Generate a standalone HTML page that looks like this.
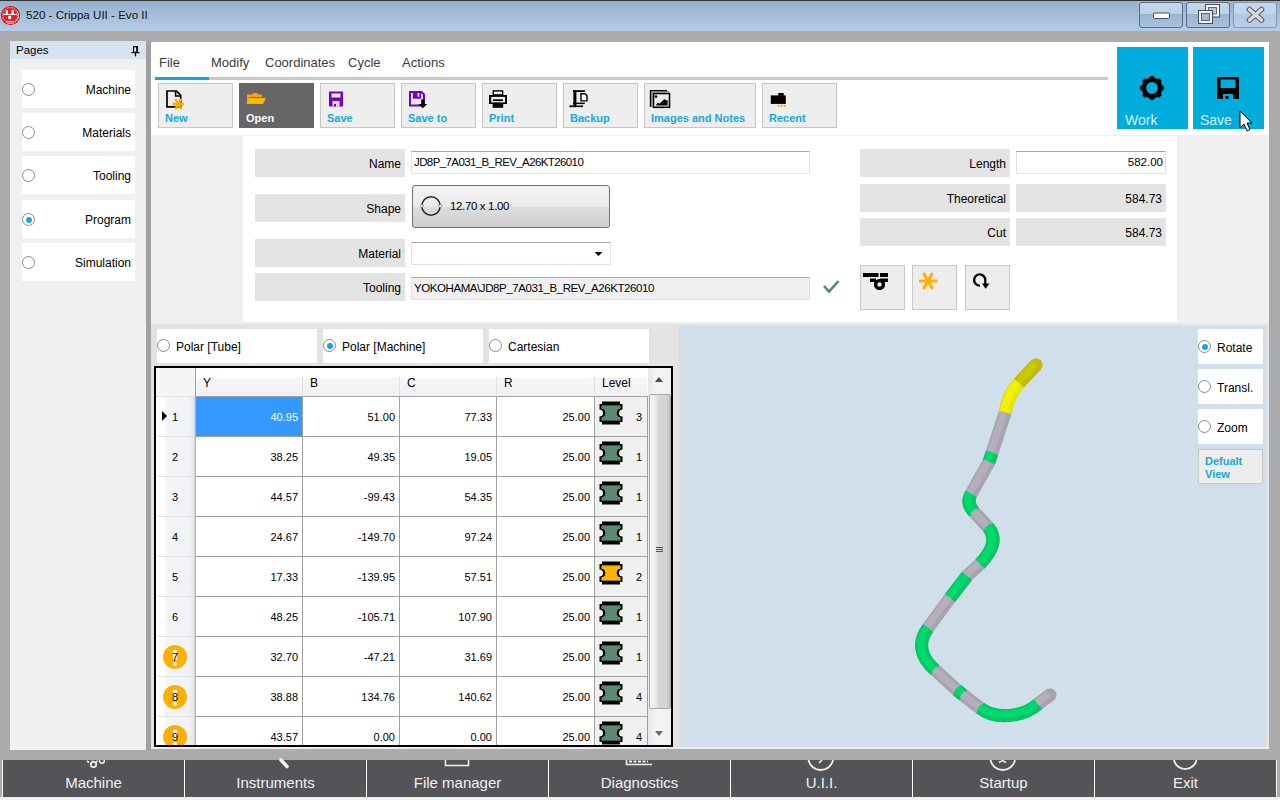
<!DOCTYPE html>
<html><head><meta charset="utf-8">
<style>
*{box-sizing:border-box;margin:0;padding:0}
html,body{width:1280px;height:800px;overflow:hidden;background:#ababab;font-family:"Liberation Sans",sans-serif;color:#000}
.a{position:absolute}
#title{left:0;top:0;width:1280px;height:31px;background:linear-gradient(#97b0ce,#b4cce6);border-top:1px solid #333}
.tb{top:2px;height:26px;width:44px;border:1px solid #5a6b85;border-radius:3px;background:linear-gradient(#c3d6ec 0,#bdd1e9 45%,#99b4d3 46%,#a8c2df 100%)}
.pcard{left:22px;width:113px;height:38px;background:#fff}
.radio{width:13px;height:13px;border:1px solid #8a8a8a;border-radius:50%;background:#fff}
.radio.on::after{content:"";position:absolute;left:2.5px;top:2.5px;width:6px;height:6px;border-radius:50%;background:#12a8e0}
.ptxt{font-size:12px;right:4px;top:13px;color:#000}
.tab{top:55px;font-size:13px;color:#3c3c3c}
.btn{top:83px;height:45px;background:#eeeeee;border:1px solid #c6c6c6}
.btn .lbl{position:absolute;left:6px;top:28px;font-size:11px;font-weight:bold;color:#17a8da;white-space:nowrap}
.lab{background:#e3e3e3;font-size:12px;text-align:right;padding-right:4px;padding-top:1px;white-space:nowrap}
.inp{background:#fff;border:1px solid #dde1e9;border-top-color:#a4a4a4;font-size:11.5px;white-space:nowrap;overflow:hidden}
.bb{top:760px;height:37px;background:#545358;color:#f2f2f2;font-size:15px;text-align:center;border-left:1px solid #fff;padding-top:14px}
.hdr{background:linear-gradient(#fff 0,#fff 33%,#f6f7f9 36%,#eff0f3 100%)}
.hd{font-size:12px;line-height:31px;color:#000}
.rh{left:0;width:38px;background:linear-gradient(90deg,#fff 0,#fff 24%,#f4f5f8 26%,#f1f2f5 85%,#e6e7ea 100%)}
.cv{font-size:11px;line-height:40px;white-space:nowrap}
.sb{background:linear-gradient(90deg,#e8e8e8,#f4f4f4 40%,#f0f0f0)}
.thumb{border:1px solid #a8a8a8;border-radius:2px;background:linear-gradient(90deg,#f4f4f4 0,#e8e8e8 30%,#d6d6d8 45%,#d4d4d6 85%,#bcbcc0 100%)}
.card{background:#fff}
.rt{font-size:12px;white-space:nowrap;margin-top:1px}
</style></head><body>
<!-- title bar -->
<div class="a" id="title"></div>
<div class="a" style="left:2px;top:7px;width:17px;height:17px;border-radius:50%;background:#e8101b;border:1px solid #fff;box-shadow:0 0 0 1px #c00"></div>
<div class="a" style="left:26px;top:8px;font-size:11.6px;color:#111;white-space:nowrap">520 - Crippa UII - Evo II</div>
<div class="a tb" style="left:1139px"></div>
<div class="a tb" style="left:1186px"></div>
<div class="a tb" style="left:1233px;background:linear-gradient(#c6d8ed 0,#c0d4ea 45%,#b3c9e3 46%,#b9cee7 100%);border-color:#8496b0"></div>

<!-- pages panel -->
<div class="a" style="left:10px;top:41px;width:136px;height:709px;background:#f0f0f0"></div>
<div class="a" style="left:10px;top:41px;width:136px;height:18px;background:#d6e4f2"></div>
<div class="a" style="left:16px;top:44px;font-size:11.5px">Pages</div>
<div class="a pcard" style="top:70px"><div class="a radio" style="left:0;top:13px"></div><div class="a ptxt">Machine</div></div>
<div class="a pcard" style="top:113px"><div class="a radio" style="left:0;top:13px"></div><div class="a ptxt">Materials</div></div>
<div class="a pcard" style="top:156px"><div class="a radio" style="left:0;top:13px"></div><div class="a ptxt">Tooling</div></div>
<div class="a pcard" style="top:200px"><div class="a radio on" style="left:0;top:13px"></div><div class="a ptxt">Program</div></div>
<div class="a pcard" style="top:243px"><div class="a radio" style="left:0;top:13px"></div><div class="a ptxt">Simulation</div></div>

<!-- main panel -->
<div class="a" style="left:146px;top:41px;width:5px;height:709px;background:#a0a0a0"></div>
<div class="a" style="left:151px;top:42px;width:1118px;height:707px;background:#f0f0f0"></div>
<div class="a" style="left:151px;top:42px;width:1118px;height:93px;background:#fff"></div>

<!-- tabs -->
<div class="a tab" style="left:159px">File</div>
<div class="a tab" style="left:211px">Modify</div>
<div class="a tab" style="left:265px">Coordinates</div>
<div class="a tab" style="left:348px">Cycle</div>
<div class="a tab" style="left:402px">Actions</div>
<div class="a" style="left:155px;top:77px;width:953px;height:3px;background:#c8c8c8"></div>
<div class="a" style="left:155px;top:77px;width:54px;height:3px;background:#0ea8d8"></div>

<!-- toolbar buttons -->
<div class="a btn" style="left:158px;width:75px"><span class="lbl">New</span></div>
<div class="a btn" style="left:239px;width:75px;background:#666;border-color:#666"><span class="lbl" style="color:#fff">Open</span></div>
<div class="a btn" style="left:320px;width:75px"><span class="lbl">Save</span></div>
<div class="a btn" style="left:401px;width:75px"><span class="lbl">Save to</span></div>
<div class="a btn" style="left:482px;width:75px"><span class="lbl">Print</span></div>
<div class="a btn" style="left:563px;width:75px"><span class="lbl">Backup</span></div>
<div class="a btn" style="left:644px;width:112px"><span class="lbl">Images and Notes</span></div>
<div class="a btn" style="left:762px;width:75px"><span class="lbl">Recent</span></div>

<!-- work / save tiles -->
<div class="a" style="left:1117px;top:47px;width:71px;height:82px;background:#00acdc"><div class="a" style="left:8px;top:65px;font-size:14px;color:#d9f1f9">Work</div></div>
<div class="a" style="left:1193px;top:47px;width:71px;height:82px;background:#00acdc"><div class="a" style="left:7px;top:65px;font-size:14px;color:#d9f1f9">Save</div></div>

<!-- form card -->
<div class="a" style="left:243px;top:136px;width:934px;height:186px;background:#fff"></div>
<div class="a lab" style="left:255px;top:149px;width:150px;height:28px;line-height:28px">Name</div>
<div class="a inp" style="left:411px;top:151px;width:399px;height:23px;line-height:21px;padding-left:2px;font-size:11.5px;letter-spacing:-0.6px">JD8P_7A031_B_REV_A26KT26010</div>
<div class="a lab" style="left:255px;top:194px;width:150px;height:28px;line-height:28px">Shape</div>
<div class="a" style="left:412px;top:185px;width:198px;height:43px;border:1px solid #707070;border-radius:3px;background:linear-gradient(#f2f2f2 0,#ebebeb 50%,#dddddd 51%,#cfcfcf 100%)"><div class="a" style="left:37px;top:14px;font-size:11.5px;letter-spacing:-0.35px">12.70 x 1.00</div></div>
<div class="a lab" style="left:255px;top:239px;width:150px;height:28px;line-height:28px">Material</div>
<div class="a inp" style="left:411px;top:242px;width:200px;height:23px"></div>
<div class="a lab" style="left:255px;top:273px;width:150px;height:28px;line-height:28px">Tooling</div>
<div class="a inp" style="left:411px;top:277px;width:399px;height:23px;line-height:21px;padding-left:2px;background:#f0f0f0;font-size:11.5px;letter-spacing:-0.42px">YOKOHAMA\JD8P_7A031_B_REV_A26KT26010</div>

<div class="a lab" style="left:860px;top:149px;width:150px;height:28px;line-height:28px">Length</div>
<div class="a inp" style="left:1016px;top:151px;width:150px;height:23px;line-height:21px;text-align:right;padding-right:2px">582.00</div>
<div class="a lab" style="left:860px;top:184px;width:150px;height:28px;line-height:28px">Theoretical</div>
<div class="a lab" style="left:1016px;top:184px;width:150px;height:28px;line-height:28px">584.73</div>
<div class="a lab" style="left:860px;top:218px;width:150px;height:28px;line-height:28px">Cut</div>
<div class="a lab" style="left:1016px;top:218px;width:150px;height:28px;line-height:28px">584.73</div>

<div class="a" style="left:860px;top:265px;width:45px;height:45px;background:#ededed;border:1px solid #c8c8c8"></div>
<div class="a" style="left:912px;top:265px;width:45px;height:45px;background:#ededed;border:1px solid #c8c8c8"></div>
<div class="a" style="left:965px;top:265px;width:45px;height:45px;background:#ededed;border:1px solid #c8c8c8"></div>

<!-- lower area -->
<div class="a" style="left:151px;top:323px;width:1118px;height:1px;background:#ececec"></div>
<div class="a" style="left:151px;top:324px;width:1118px;height:423px;background:#e3e3e3"></div>
<div class="a" style="left:151px;top:747px;width:1118px;height:2px;background:#ececec"></div>
<div class="a card" style="left:157px;top:329px;width:160px;height:34px"><div class="a radio" style="left:0;top:10px"></div><div class="a rt" style="left:19px;top:10px">Polar [Tube]</div></div>
<div class="a card" style="left:323px;top:329px;width:160px;height:34px"><div class="a radio on" style="left:0;top:10px"></div><div class="a rt" style="left:19px;top:10px">Polar [Machine]</div></div>
<div class="a card" style="left:489px;top:329px;width:160px;height:34px"><div class="a radio" style="left:0;top:10px"></div><div class="a rt" style="left:19px;top:10px">Cartesian</div></div>
<!-- table -->
<div class="a" style="left:154px;top:366px;width:519px;height:381px;border:2px solid #000;background:#fff;overflow:hidden">
<div class="a hdr" style="left:0;top:0;width:491px;height:28px"></div>
<div class="a" style="left:0;top:0;width:39px;height:28px;background:#f4f5f7"></div>
<div class="a hd" style="left:47px;top:0">Y</div>
<div class="a hd" style="left:154px;top:0">B</div>
<div class="a" style="left:146px;top:9px;width:1px;height:18px;background:#dedfe2"></div>
<div class="a hd" style="left:251px;top:0">C</div>
<div class="a" style="left:243px;top:9px;width:1px;height:18px;background:#dedfe2"></div>
<div class="a hd" style="left:348px;top:0">R</div>
<div class="a" style="left:340px;top:9px;width:1px;height:18px;background:#dedfe2"></div>
<div class="a hd" style="left:446px;top:0">Level</div>
<div class="a" style="left:438px;top:9px;width:1px;height:18px;background:#dedfe2"></div>
<div class="a" style="left:39px;top:0;width:1px;height:28px;background:#a0a0a0"></div>
<div class="a" style="left:0;top:28px;width:491px;height:1px;background:#a0a0a0"></div>
<div class="a rh" style="left:0;top:29px;height:39px"></div>
<div class="a" style="left:1px;top:28px;width:37px;height:1px;background:#e2e3e6"></div>
<div class="a" style="left:40px;top:29px;width:106px;height:39px;background:#3399ff;"></div>
<div class="a cv" style="right:373px;top:29px;color:#fff">40.95</div>
<div class="a" style="left:147px;top:29px;width:96px;height:39px;"></div>
<div class="a cv" style="right:276px;top:29px;color:#000">51.00</div>
<div class="a" style="left:244px;top:29px;width:96px;height:39px;"></div>
<div class="a cv" style="right:179px;top:29px;color:#000">77.33</div>
<div class="a" style="left:341px;top:29px;width:97px;height:39px;"></div>
<div class="a cv" style="right:81px;top:29px;color:#000">25.00</div>
<div class="a" style="left:439px;top:29px;width:52px;height:39px;background:#f0f0f0;"></div>
<svg class="a" style="left:443px;top:33px" width="24" height="24" viewBox="0 0 24 24"><path d="M3 0.5H21V3H23.5V8.5A3.5 3.5 0 0 0 23.5 15.5V21H21V23.5H3V21H0.5V15.5A3.5 3.5 0 0 0 0.5 8.5V3H3Z" fill="#000"/><path d="M2 4H22V8A4 4 0 0 0 22 16V20H2V16A4 4 0 0 0 2 8Z" fill="#5a8a73" stroke="#000" stroke-width="0.8"/></svg>
<div class="a cv" style="right:29px;top:29px">3</div>
<div class="a" style="left:39px;top:68px;width:452px;height:1px;background:#a0a0a0"></div>
<div class="a cv" style="left:16px;top:29px">1</div>
<div class="a" style="left:6px;top:43px;width:0;height:0;border-left:5px solid #000;border-top:5px solid transparent;border-bottom:5px solid transparent"></div>
<div class="a rh" style="left:0;top:69px;height:39px"></div>
<div class="a" style="left:1px;top:68px;width:37px;height:1px;background:#e2e3e6"></div>
<div class="a" style="left:40px;top:69px;width:106px;height:39px;"></div>
<div class="a cv" style="right:373px;top:69px;color:#000">38.25</div>
<div class="a" style="left:147px;top:69px;width:96px;height:39px;"></div>
<div class="a cv" style="right:276px;top:69px;color:#000">49.35</div>
<div class="a" style="left:244px;top:69px;width:96px;height:39px;"></div>
<div class="a cv" style="right:179px;top:69px;color:#000">19.05</div>
<div class="a" style="left:341px;top:69px;width:97px;height:39px;"></div>
<div class="a cv" style="right:81px;top:69px;color:#000">25.00</div>
<div class="a" style="left:439px;top:69px;width:52px;height:39px;background:#f0f0f0;"></div>
<svg class="a" style="left:443px;top:73px" width="24" height="24" viewBox="0 0 24 24"><path d="M3 0.5H21V3H23.5V8.5A3.5 3.5 0 0 0 23.5 15.5V21H21V23.5H3V21H0.5V15.5A3.5 3.5 0 0 0 0.5 8.5V3H3Z" fill="#000"/><path d="M2 4H22V8A4 4 0 0 0 22 16V20H2V16A4 4 0 0 0 2 8Z" fill="#5a8a73" stroke="#000" stroke-width="0.8"/></svg>
<div class="a cv" style="right:29px;top:69px">1</div>
<div class="a" style="left:39px;top:108px;width:452px;height:1px;background:#a0a0a0"></div>
<div class="a cv" style="left:16px;top:69px">2</div>
<div class="a rh" style="left:0;top:109px;height:39px"></div>
<div class="a" style="left:1px;top:108px;width:37px;height:1px;background:#e2e3e6"></div>
<div class="a" style="left:40px;top:109px;width:106px;height:39px;"></div>
<div class="a cv" style="right:373px;top:109px;color:#000">44.57</div>
<div class="a" style="left:147px;top:109px;width:96px;height:39px;"></div>
<div class="a cv" style="right:276px;top:109px;color:#000">-99.43</div>
<div class="a" style="left:244px;top:109px;width:96px;height:39px;"></div>
<div class="a cv" style="right:179px;top:109px;color:#000">54.35</div>
<div class="a" style="left:341px;top:109px;width:97px;height:39px;"></div>
<div class="a cv" style="right:81px;top:109px;color:#000">25.00</div>
<div class="a" style="left:439px;top:109px;width:52px;height:39px;background:#f0f0f0;"></div>
<svg class="a" style="left:443px;top:113px" width="24" height="24" viewBox="0 0 24 24"><path d="M3 0.5H21V3H23.5V8.5A3.5 3.5 0 0 0 23.5 15.5V21H21V23.5H3V21H0.5V15.5A3.5 3.5 0 0 0 0.5 8.5V3H3Z" fill="#000"/><path d="M2 4H22V8A4 4 0 0 0 22 16V20H2V16A4 4 0 0 0 2 8Z" fill="#5a8a73" stroke="#000" stroke-width="0.8"/></svg>
<div class="a cv" style="right:29px;top:109px">1</div>
<div class="a" style="left:39px;top:148px;width:452px;height:1px;background:#a0a0a0"></div>
<div class="a cv" style="left:16px;top:109px">3</div>
<div class="a rh" style="left:0;top:149px;height:39px"></div>
<div class="a" style="left:1px;top:148px;width:37px;height:1px;background:#e2e3e6"></div>
<div class="a" style="left:40px;top:149px;width:106px;height:39px;"></div>
<div class="a cv" style="right:373px;top:149px;color:#000">24.67</div>
<div class="a" style="left:147px;top:149px;width:96px;height:39px;"></div>
<div class="a cv" style="right:276px;top:149px;color:#000">-149.70</div>
<div class="a" style="left:244px;top:149px;width:96px;height:39px;"></div>
<div class="a cv" style="right:179px;top:149px;color:#000">97.24</div>
<div class="a" style="left:341px;top:149px;width:97px;height:39px;"></div>
<div class="a cv" style="right:81px;top:149px;color:#000">25.00</div>
<div class="a" style="left:439px;top:149px;width:52px;height:39px;background:#f0f0f0;"></div>
<svg class="a" style="left:443px;top:153px" width="24" height="24" viewBox="0 0 24 24"><path d="M3 0.5H21V3H23.5V8.5A3.5 3.5 0 0 0 23.5 15.5V21H21V23.5H3V21H0.5V15.5A3.5 3.5 0 0 0 0.5 8.5V3H3Z" fill="#000"/><path d="M2 4H22V8A4 4 0 0 0 22 16V20H2V16A4 4 0 0 0 2 8Z" fill="#5a8a73" stroke="#000" stroke-width="0.8"/></svg>
<div class="a cv" style="right:29px;top:149px">1</div>
<div class="a" style="left:39px;top:188px;width:452px;height:1px;background:#a0a0a0"></div>
<div class="a cv" style="left:16px;top:149px">4</div>
<div class="a rh" style="left:0;top:189px;height:39px"></div>
<div class="a" style="left:1px;top:188px;width:37px;height:1px;background:#e2e3e6"></div>
<div class="a" style="left:40px;top:189px;width:106px;height:39px;"></div>
<div class="a cv" style="right:373px;top:189px;color:#000">17.33</div>
<div class="a" style="left:147px;top:189px;width:96px;height:39px;"></div>
<div class="a cv" style="right:276px;top:189px;color:#000">-139.95</div>
<div class="a" style="left:244px;top:189px;width:96px;height:39px;"></div>
<div class="a cv" style="right:179px;top:189px;color:#000">57.51</div>
<div class="a" style="left:341px;top:189px;width:97px;height:39px;"></div>
<div class="a cv" style="right:81px;top:189px;color:#000">25.00</div>
<div class="a" style="left:439px;top:189px;width:52px;height:39px;background:#f0f0f0;"></div>
<svg class="a" style="left:443px;top:193px" width="24" height="24" viewBox="0 0 24 24"><path d="M3 0.5H21V3H23.5V8.5A3.5 3.5 0 0 0 23.5 15.5V21H21V23.5H3V21H0.5V15.5A3.5 3.5 0 0 0 0.5 8.5V3H3Z" fill="#000"/><path d="M2 4H22V8A4 4 0 0 0 22 16V20H2V16A4 4 0 0 0 2 8Z" fill="#ffb400" stroke="#000" stroke-width="0.8"/></svg>
<div class="a cv" style="right:29px;top:189px">2</div>
<div class="a" style="left:39px;top:228px;width:452px;height:1px;background:#a0a0a0"></div>
<div class="a cv" style="left:16px;top:189px">5</div>
<div class="a rh" style="left:0;top:229px;height:39px"></div>
<div class="a" style="left:1px;top:228px;width:37px;height:1px;background:#e2e3e6"></div>
<div class="a" style="left:40px;top:229px;width:106px;height:39px;"></div>
<div class="a cv" style="right:373px;top:229px;color:#000">48.25</div>
<div class="a" style="left:147px;top:229px;width:96px;height:39px;"></div>
<div class="a cv" style="right:276px;top:229px;color:#000">-105.71</div>
<div class="a" style="left:244px;top:229px;width:96px;height:39px;"></div>
<div class="a cv" style="right:179px;top:229px;color:#000">107.90</div>
<div class="a" style="left:341px;top:229px;width:97px;height:39px;"></div>
<div class="a cv" style="right:81px;top:229px;color:#000">25.00</div>
<div class="a" style="left:439px;top:229px;width:52px;height:39px;background:#f0f0f0;"></div>
<svg class="a" style="left:443px;top:233px" width="24" height="24" viewBox="0 0 24 24"><path d="M3 0.5H21V3H23.5V8.5A3.5 3.5 0 0 0 23.5 15.5V21H21V23.5H3V21H0.5V15.5A3.5 3.5 0 0 0 0.5 8.5V3H3Z" fill="#000"/><path d="M2 4H22V8A4 4 0 0 0 22 16V20H2V16A4 4 0 0 0 2 8Z" fill="#5a8a73" stroke="#000" stroke-width="0.8"/></svg>
<div class="a cv" style="right:29px;top:229px">1</div>
<div class="a" style="left:39px;top:268px;width:452px;height:1px;background:#a0a0a0"></div>
<div class="a cv" style="left:16px;top:229px">6</div>
<div class="a rh" style="left:0;top:269px;height:39px"></div>
<div class="a" style="left:1px;top:268px;width:37px;height:1px;background:#e2e3e6"></div>
<div class="a" style="left:40px;top:269px;width:106px;height:39px;"></div>
<div class="a cv" style="right:373px;top:269px;color:#000">32.70</div>
<div class="a" style="left:147px;top:269px;width:96px;height:39px;"></div>
<div class="a cv" style="right:276px;top:269px;color:#000">-47.21</div>
<div class="a" style="left:244px;top:269px;width:96px;height:39px;"></div>
<div class="a cv" style="right:179px;top:269px;color:#000">31.69</div>
<div class="a" style="left:341px;top:269px;width:97px;height:39px;"></div>
<div class="a cv" style="right:81px;top:269px;color:#000">25.00</div>
<div class="a" style="left:439px;top:269px;width:52px;height:39px;background:#f0f0f0;"></div>
<svg class="a" style="left:443px;top:273px" width="24" height="24" viewBox="0 0 24 24"><path d="M3 0.5H21V3H23.5V8.5A3.5 3.5 0 0 0 23.5 15.5V21H21V23.5H3V21H0.5V15.5A3.5 3.5 0 0 0 0.5 8.5V3H3Z" fill="#000"/><path d="M2 4H22V8A4 4 0 0 0 22 16V20H2V16A4 4 0 0 0 2 8Z" fill="#5a8a73" stroke="#000" stroke-width="0.8"/></svg>
<div class="a cv" style="right:29px;top:269px">1</div>
<div class="a" style="left:39px;top:308px;width:452px;height:1px;background:#a0a0a0"></div>
<div class="a" style="left:7px;top:277px;width:24px;height:24px;border-radius:50%;background:#ffb000"></div>
<div class="a" style="left:17px;top:282px;width:4px;height:10px;background:#fff"></div>
<div class="a" style="left:17px;top:294px;width:4px;height:4px;border-radius:50%;background:#fff"></div>
<div class="a cv" style="left:16px;top:269px">7</div>
<div class="a rh" style="left:0;top:309px;height:39px"></div>
<div class="a" style="left:1px;top:308px;width:37px;height:1px;background:#e2e3e6"></div>
<div class="a" style="left:40px;top:309px;width:106px;height:39px;"></div>
<div class="a cv" style="right:373px;top:309px;color:#000">38.88</div>
<div class="a" style="left:147px;top:309px;width:96px;height:39px;"></div>
<div class="a cv" style="right:276px;top:309px;color:#000">134.76</div>
<div class="a" style="left:244px;top:309px;width:96px;height:39px;"></div>
<div class="a cv" style="right:179px;top:309px;color:#000">140.62</div>
<div class="a" style="left:341px;top:309px;width:97px;height:39px;"></div>
<div class="a cv" style="right:81px;top:309px;color:#000">25.00</div>
<div class="a" style="left:439px;top:309px;width:52px;height:39px;background:#f0f0f0;"></div>
<svg class="a" style="left:443px;top:313px" width="24" height="24" viewBox="0 0 24 24"><path d="M3 0.5H21V3H23.5V8.5A3.5 3.5 0 0 0 23.5 15.5V21H21V23.5H3V21H0.5V15.5A3.5 3.5 0 0 0 0.5 8.5V3H3Z" fill="#000"/><path d="M2 4H22V8A4 4 0 0 0 22 16V20H2V16A4 4 0 0 0 2 8Z" fill="#5a8a73" stroke="#000" stroke-width="0.8"/></svg>
<div class="a cv" style="right:29px;top:309px">4</div>
<div class="a" style="left:39px;top:348px;width:452px;height:1px;background:#a0a0a0"></div>
<div class="a" style="left:7px;top:317px;width:24px;height:24px;border-radius:50%;background:#ffb000"></div>
<div class="a" style="left:17px;top:322px;width:4px;height:10px;background:#fff"></div>
<div class="a" style="left:17px;top:334px;width:4px;height:4px;border-radius:50%;background:#fff"></div>
<div class="a cv" style="left:16px;top:309px">8</div>
<div class="a rh" style="left:0;top:349px;height:39px"></div>
<div class="a" style="left:1px;top:348px;width:37px;height:1px;background:#e2e3e6"></div>
<div class="a" style="left:40px;top:349px;width:106px;height:39px;"></div>
<div class="a cv" style="right:373px;top:349px;color:#000">43.57</div>
<div class="a" style="left:147px;top:349px;width:96px;height:39px;"></div>
<div class="a cv" style="right:276px;top:349px;color:#000">0.00</div>
<div class="a" style="left:244px;top:349px;width:96px;height:39px;"></div>
<div class="a cv" style="right:179px;top:349px;color:#000">0.00</div>
<div class="a" style="left:341px;top:349px;width:97px;height:39px;"></div>
<div class="a cv" style="right:81px;top:349px;color:#000">25.00</div>
<div class="a" style="left:439px;top:349px;width:52px;height:39px;background:#f0f0f0;"></div>
<svg class="a" style="left:443px;top:353px" width="24" height="24" viewBox="0 0 24 24"><path d="M3 0.5H21V3H23.5V8.5A3.5 3.5 0 0 0 23.5 15.5V21H21V23.5H3V21H0.5V15.5A3.5 3.5 0 0 0 0.5 8.5V3H3Z" fill="#000"/><path d="M2 4H22V8A4 4 0 0 0 22 16V20H2V16A4 4 0 0 0 2 8Z" fill="#5a8a73" stroke="#000" stroke-width="0.8"/></svg>
<div class="a cv" style="right:29px;top:349px">4</div>
<div class="a" style="left:39px;top:388px;width:452px;height:1px;background:#a0a0a0"></div>
<div class="a" style="left:7px;top:357px;width:24px;height:24px;border-radius:50%;background:#ffb000"></div>
<div class="a" style="left:17px;top:362px;width:4px;height:10px;background:#fff"></div>
<div class="a" style="left:17px;top:374px;width:4px;height:4px;border-radius:50%;background:#fff"></div>
<div class="a cv" style="left:16px;top:349px">9</div>
<div class="a" style="left:146px;top:28px;width:1px;height:400px;background:#a0a0a0"></div>
<div class="a" style="left:243px;top:28px;width:1px;height:400px;background:#a0a0a0"></div>
<div class="a" style="left:340px;top:28px;width:1px;height:400px;background:#a0a0a0"></div>
<div class="a" style="left:438px;top:28px;width:1px;height:400px;background:#a0a0a0"></div>
<div class="a" style="left:491px;top:28px;width:1px;height:400px;background:#a0a0a0"></div>
<div class="a" style="left:38px;top:28px;width:2px;height:400px;background:linear-gradient(90deg,#e3e5e8,#a0a0a0)"></div>
<div class="a sb" style="left:492px;top:0;width:23px;height:377px"></div>
<div class="a" style="left:499px;top:9px;width:0;height:0;border-left:4.5px solid transparent;border-right:4.5px solid transparent;border-bottom:5px solid #4a4a4a"></div>
<div class="a" style="left:499px;top:363px;width:0;height:0;border-left:4.5px solid transparent;border-right:4.5px solid transparent;border-top:5px solid #6a6a6a"></div>
<div class="a thumb" style="left:493px;top:26px;width:22px;height:315px"></div>
<div class="a" style="left:500px;top:179px;width:7px;height:1px;background:#555;box-shadow:0 2px 0 #555,0 4px 0 #555"></div>
</div>
<!-- 3d view -->
<div class="a" style="left:679px;top:326px;width:587px;height:421px;background:#d1dfeb"></div>
<svg class="a" style="left:0;top:0" width="1280" height="800" viewBox="0 0 1280 800">
<path d="M1036 365 L1019 383 Q1008 395 1005 413 L992 453 L989 462 L971 494 Q965.6 503 974 512 L988 527 Q1001 542 980 564 L967 576 L950 598 L928 628 Q912.3 649.4 935 670 L957 690 L963 695 L980 708 C997 721 1025 716 1038 704 L1050 695" fill="none" stroke="#a7a3b1" stroke-width="13" stroke-linecap="round" stroke-linejoin="round"/>
<circle cx="1036" cy="365" r="6.5" fill="#c2bc00"/>
<path d="M1036 365 L1019 383" fill="none" stroke="#c2bc00" stroke-width="13" stroke-linecap="butt"/>
<path d="M1019 383 Q1008 395 1005 413" fill="none" stroke="#e6e600" stroke-width="13" stroke-linecap="butt"/>
<path d="M992 453 L989 462" fill="none" stroke="#00c862" stroke-width="13" stroke-linecap="butt"/>
<path d="M971 494 Q965.6 503 974 512" fill="none" stroke="#00c862" stroke-width="13" stroke-linecap="butt"/>
<path d="M988 527 Q1001 542 980 564" fill="none" stroke="#00c862" stroke-width="13" stroke-linecap="butt"/>
<path d="M967 576 L950 598" fill="none" stroke="#00c862" stroke-width="13" stroke-linecap="butt"/>
<path d="M928 628 Q912.3 649.4 935 670" fill="none" stroke="#00c862" stroke-width="13" stroke-linecap="butt"/>
<path d="M957 690 L963 695" fill="none" stroke="#00c862" stroke-width="13" stroke-linecap="butt"/>
<path d="M980 708 C997 721 1025 716 1038 704" fill="none" stroke="#00c862" stroke-width="13" stroke-linecap="butt"/>
<path d="M1036 365 L1019 383" fill="none" stroke="#cdc700" stroke-width="7" stroke-linecap="butt" transform="translate(-1 -1)"/>
<path d="M1019 383 Q1008 395 1005 413" fill="none" stroke="#f2f200" stroke-width="7" stroke-linecap="butt" transform="translate(-1 -1)"/>
<path d="M1005 413 L992 453" fill="none" stroke="#b3afbd" stroke-width="7" stroke-linecap="butt" transform="translate(-1 -1)"/>
<path d="M992 453 L989 462" fill="none" stroke="#00d96e" stroke-width="7" stroke-linecap="butt" transform="translate(-1 -1)"/>
<path d="M989 462 L971 494" fill="none" stroke="#b3afbd" stroke-width="7" stroke-linecap="butt" transform="translate(-1 -1)"/>
<path d="M971 494 Q965.6 503 974 512" fill="none" stroke="#00d96e" stroke-width="7" stroke-linecap="butt" transform="translate(-1 -1)"/>
<path d="M974 512 L988 527" fill="none" stroke="#b3afbd" stroke-width="7" stroke-linecap="butt" transform="translate(-1 -1)"/>
<path d="M988 527 Q1001 542 980 564" fill="none" stroke="#00d96e" stroke-width="7" stroke-linecap="butt" transform="translate(-1 -1)"/>
<path d="M980 564 L967 576" fill="none" stroke="#b3afbd" stroke-width="7" stroke-linecap="butt" transform="translate(-1 -1)"/>
<path d="M967 576 L950 598" fill="none" stroke="#00d96e" stroke-width="7" stroke-linecap="butt" transform="translate(-1 -1)"/>
<path d="M950 598 L928 628" fill="none" stroke="#b3afbd" stroke-width="7" stroke-linecap="butt" transform="translate(-1 -1)"/>
<path d="M928 628 Q912.3 649.4 935 670" fill="none" stroke="#00d96e" stroke-width="7" stroke-linecap="butt" transform="translate(-1 -1)"/>
<path d="M935 670 L957 690" fill="none" stroke="#b3afbd" stroke-width="7" stroke-linecap="butt" transform="translate(-1 -1)"/>
<path d="M957 690 L963 695" fill="none" stroke="#00d96e" stroke-width="7" stroke-linecap="butt" transform="translate(-1 -1)"/>
<path d="M963 695 L980 708" fill="none" stroke="#b3afbd" stroke-width="7" stroke-linecap="butt" transform="translate(-1 -1)"/>
<path d="M980 708 C997 721 1025 716 1038 704" fill="none" stroke="#00d96e" stroke-width="7" stroke-linecap="butt" transform="translate(-1 -1)"/>
<path d="M1038 704 L1050 695" fill="none" stroke="#b3afbd" stroke-width="7" stroke-linecap="butt" transform="translate(-1 -1)"/>
</svg>
<div class="a card" style="left:1198px;top:329px;width:65px;height:35px"><div class="a radio on" style="left:0;top:11px"></div><div class="a rt" style="left:19px;top:11px">Rotate</div></div>
<div class="a card" style="left:1198px;top:369px;width:65px;height:35px"><div class="a radio" style="left:0;top:11px"></div><div class="a rt" style="left:19px;top:11px">Transl.</div></div>
<div class="a card" style="left:1198px;top:409px;width:65px;height:35px"><div class="a radio" style="left:0;top:11px"></div><div class="a rt" style="left:19px;top:11px">Zoom</div></div>
<div class="a" style="left:1198px;top:449px;width:65px;height:35px;background:#ededed;border:1px solid #c8c8c8"><div class="a" style="left:6px;top:5px;font-size:11px;font-weight:bold;color:#17a8da;line-height:13px">Defualt<br>View</div></div>

<!-- bottom bar -->
<div class="a" style="left:0;top:797px;width:1280px;height:3px;background:#f0f0f0"></div>
<div class="a bb" style="left:2px;width:182px">Machine</div>
<div class="a bb" style="left:184px;width:182px">Instruments</div>
<div class="a bb" style="left:366px;width:182px">File manager</div>
<div class="a bb" style="left:548px;width:182px">Diagnostics</div>
<div class="a bb" style="left:730px;width:182px">U.I.I.</div>
<div class="a bb" style="left:912px;width:182px">Startup</div>
<div class="a bb" style="left:1094px;width:183px;border-right:1px solid #fff">Exit</div>
<!-- icons -->
<svg class="a" style="left:0;top:0" width="1280" height="800" viewBox="0 0 1280 800">
<!-- app icon -->
<circle cx="10" cy="15" r="8.1" fill="#ec1c24"/>
<circle cx="10" cy="15" r="7.3" fill="none" stroke="#fff" stroke-width="0.7" stroke-dasharray="1.2 1.2"/>
<path d="M3 14.5H17" stroke="#fff" stroke-width="1.1"/>
<rect x="5.8" y="10.2" width="2.2" height="3.8" fill="#fff"/>
<rect x="11.6" y="10.2" width="2.2" height="3.8" fill="#fff"/>
<rect x="8.3" y="15.8" width="2.8" height="3.4" fill="#fff"/>
<path d="M7 21.6H13" stroke="#fff" stroke-width="0.9"/>
<!-- pin -->
<rect x="133" y="46" width="5" height="6.3" fill="#000"/>
<rect x="134.1" y="47.4" width="2.1" height="4.3" fill="#dce8f4"/>
<path d="M132 52.6H139M135.5 52.6V55.8" stroke="#000" stroke-width="1.3" stroke-linecap="round"/>
<!-- window buttons glyphs -->
<rect x="1153.5" y="13" width="16" height="5.5" rx="1" fill="#fff" stroke="#4a4a5a" stroke-width="1"/>
<rect x="1205.5" y="4.5" width="14" height="12.5" fill="#f4f4f4" stroke="#4a4a5a" stroke-width="1"/>
<rect x="1208.5" y="7.5" width="8" height="6.5" fill="#b9c9dc" stroke="#4a4a5a" stroke-width="0.8"/>
<rect x="1198.5" y="10.5" width="14" height="13" fill="#f4f4f4" stroke="#4a4a5a" stroke-width="1"/>
<rect x="1201.5" y="13.5" width="8" height="7" fill="#a4b9d2" stroke="#4a4a5a" stroke-width="0.8"/>
<path d="M1249.5 9.5L1261.5 20M1261.5 9.5L1249.5 20" stroke="#55586a" stroke-width="5.6" stroke-linecap="round"/>
<path d="M1249.5 9.5L1261.5 20M1261.5 9.5L1249.5 20" stroke="#dcdcdc" stroke-width="3.6" stroke-linecap="round"/>
<!-- New -->
<path d="M167 91H176.5L180.7 95.3V106.8H167Z" fill="#eeeeee" stroke="#000" stroke-width="1.7"/>
<path d="M175.6 91V96H180.7" fill="none" stroke="#000" stroke-width="1.6"/>
<path d="M173.3 104H183.3M175.8 99.7L180.8 108.3M180.8 99.7L175.8 108.3" stroke="#fbb000" stroke-width="2.3" stroke-linecap="round"/>
<!-- Open folder -->
<path d="M247 94.5H252L253.5 93H257L258 94.5H262V97H249.5L247 104Z" fill="#f7a900"/>
<path d="M249 98H266L263 104H246.5Z" fill="#ffb400"/>
<!-- Save -->
<path d="M329 91.5H343V106.5H329Z" fill="#7300c3"/>
<rect x="331.5" y="93.5" width="9" height="4" fill="#eeeeee"/>
<rect x="332.5" y="101" width="7" height="5.5" fill="#eeeeee"/>
<rect x="334" y="104" width="2" height="2.5" fill="#7300c3"/>
<!-- Save to -->
<path d="M410 92H421.5L424 94.5V105.6H410Z" fill="#eeeeee" stroke="#7300c3" stroke-width="2"/>
<rect x="412.8" y="92" width="8.2" height="6.7" fill="#7300c3"/>
<rect x="417.5" y="93" width="1.8" height="3.7" fill="#eeeeee"/>
<rect x="421.2" y="99.3" width="3.3" height="5" fill="#000"/>
<path d="M418.4 104H427.2L422.8 108.3Z" fill="#000"/>
<!-- Print -->
<rect x="493.3" y="90.9" width="9.3" height="4" fill="none" stroke="#000" stroke-width="1.4"/>
<rect x="489" y="95" width="18" height="9" fill="#000"/>
<rect x="491.2" y="96.9" width="13.8" height="5.5" fill="#eeeeee"/>
<rect x="493" y="99.3" width="10" height="1.8" fill="#000"/>
<rect x="492.6" y="104" width="10.6" height="3.8" fill="#000"/>
<!-- Backup -->
<rect x="573.4" y="90.2" width="3" height="17" fill="#000"/>
<rect x="573" y="90.2" width="11.8" height="1.8" fill="#000"/>
<rect x="573" y="102.6" width="11.8" height="1.5" fill="#000"/>
<path d="M581 93.7H585L587 95.7V100.9H581Z" fill="#fff" stroke="#000" stroke-width="1.4"/>
<path d="M570 106.3H582.5" stroke="#000" stroke-width="1.5"/>
<circle cx="570.5" cy="106.3" r="1.1" fill="#000"/><circle cx="582" cy="106.3" r="1.1" fill="#000"/>
<!-- Images -->
<path d="M650.5 107V90.6H667" fill="none" stroke="#000" stroke-width="1.4"/>
<path d="M651.8 106.5V91.8H668.5" fill="none" stroke="#666" stroke-width="1"/>
<rect x="653.5" y="93.5" width="16" height="13.8" fill="#eeeeee" stroke="#000" stroke-width="1.6"/>
<path d="M655.8 105.5L657.8 102.5L659.5 103.8L664.5 99L666 100.5L667.6 99.8V105.5Z" fill="#000"/>
<circle cx="656" cy="96.5" r="1.3" fill="#000"/>
<!-- Recent -->
<rect x="770.8" y="95.4" width="15" height="8.5" fill="#000"/>
<rect x="778.1" y="93" width="5.7" height="2.8" rx="0.8" fill="#000"/>
<circle cx="778.5" cy="105.8" r="1.1" fill="#f5a800"/><circle cx="781.5" cy="105.8" r="1.1" fill="#f5a800"/><circle cx="784.5" cy="105.8" r="1.1" fill="#f5a800"/>
<!-- Work gear -->
<g transform="translate(1152 88)">
<circle r="8.2" fill="none" stroke="#000" stroke-width="4.6"/>
<g fill="#000"><rect x="-2.2" y="-12" width="4.4" height="5" rx="0.8"/><rect x="-2.2" y="7" width="4.4" height="5" rx="0.8"/><rect x="-12" y="-2.2" width="5" height="4.4" rx="0.8"/><rect x="7" y="-2.2" width="5" height="4.4" rx="0.8"/>
<g transform="rotate(45)"><rect x="-2.2" y="-12" width="4.4" height="5" rx="0.8"/><rect x="-2.2" y="7" width="4.4" height="5" rx="0.8"/><rect x="-12" y="-2.2" width="5" height="4.4" rx="0.8"/><rect x="7" y="-2.2" width="5" height="4.4" rx="0.8"/></g></g>
</g>
<!-- Save floppy tile -->
<rect x="1217" y="77" width="22" height="22" fill="#000"/>
<rect x="1220.5" y="79.5" width="15" height="8.5" fill="#00acdc"/>
<rect x="1223" y="94" width="10" height="5" fill="#00acdc"/>
<rect x="1225.5" y="96" width="3" height="3" fill="#000"/>
<!-- cursor -->
<path d="M1240 111V128L1244 124L1247 131L1250 129.5L1247 123H1252Z" fill="#fff" stroke="#000" stroke-width="1"/>
<!-- shape circle -->
<circle cx="431" cy="206" r="9.2" fill="none" stroke="#222" stroke-width="1.5"/>
<circle cx="421.8" cy="206" r="1.5" fill="#fff" stroke="#555" stroke-width="0.6"/>
<circle cx="440.2" cy="206" r="1.5" fill="#fff" stroke="#555" stroke-width="0.6"/>
<!-- combo arrow -->
<path d="M594.5 252H602.5L598.5 256Z" fill="#000"/>
<!-- check -->
<path d="M824 286L829 291.5L838.5 281" fill="none" stroke="#4a8c70" stroke-width="2.6"/>
<!-- tool icons -->
<rect x="863" y="273" width="15.5" height="4" fill="#000"/>
<rect x="880" y="273" width="8" height="4" fill="#000"/>
<rect x="870" y="278.5" width="6" height="3.5" fill="#000"/>
<rect x="880" y="278.5" width="8" height="3.5" fill="#000"/>
<circle cx="879.5" cy="284.5" r="3.9" fill="none" stroke="#000" stroke-width="3.4"/>
<path d="M919 281H937.5M923.4 273L932.6 289M932.6 273L923.4 289" stroke="#ffb000" stroke-width="3"/>
<path d="M980 285.6A5.6 5.6 0 1 1 985.3 280.2V284" fill="none" stroke="#000" stroke-width="2.3"/>
<path d="M982 283.5H989.6L985.6 288.8Z" fill="#000"/>
<!-- bottom bar icons -->
<g stroke="#f0f0f0" fill="none">
<circle cx="93.5" cy="764.5" r="2.7" stroke-width="1.7"/>
<path d="M87 761L89 762.5M92.5 760.5V761.5M97.5 761L96 762" stroke-width="1.6"/>
<path d="M99.5 760V760.8A2.4 2.4 0 0 0 104.3 760.8V760" stroke-width="1.5"/>
<path d="M281 760L287 766.5" stroke-width="3.6" stroke-linecap="round"/>
<path d="M445.5 760V765.5H468.5V760" stroke-width="1.6"/>
<path d="M626.5 760V764.5H652" stroke-width="1.6"/>
<path d="M629 761.5H648" stroke-width="2" stroke-dasharray="3 1.5"/>
<path d="M808.5 760A12.5 12.5 0 0 0 833 760" stroke-width="1.8"/>
<path d="M819 763L822 760" stroke-width="1.6"/>
<path d="M990.5 760A12.5 12.5 0 0 0 1015 760" stroke-width="1.8"/>
<path d="M999 762.5L1002.5 760.5L1006 762.5" stroke-width="1.5"/>
<path d="M1174 760A11.5 11.5 0 0 0 1196.5 760" stroke-width="1.8"/>
</g>
</svg>

</body></html>
